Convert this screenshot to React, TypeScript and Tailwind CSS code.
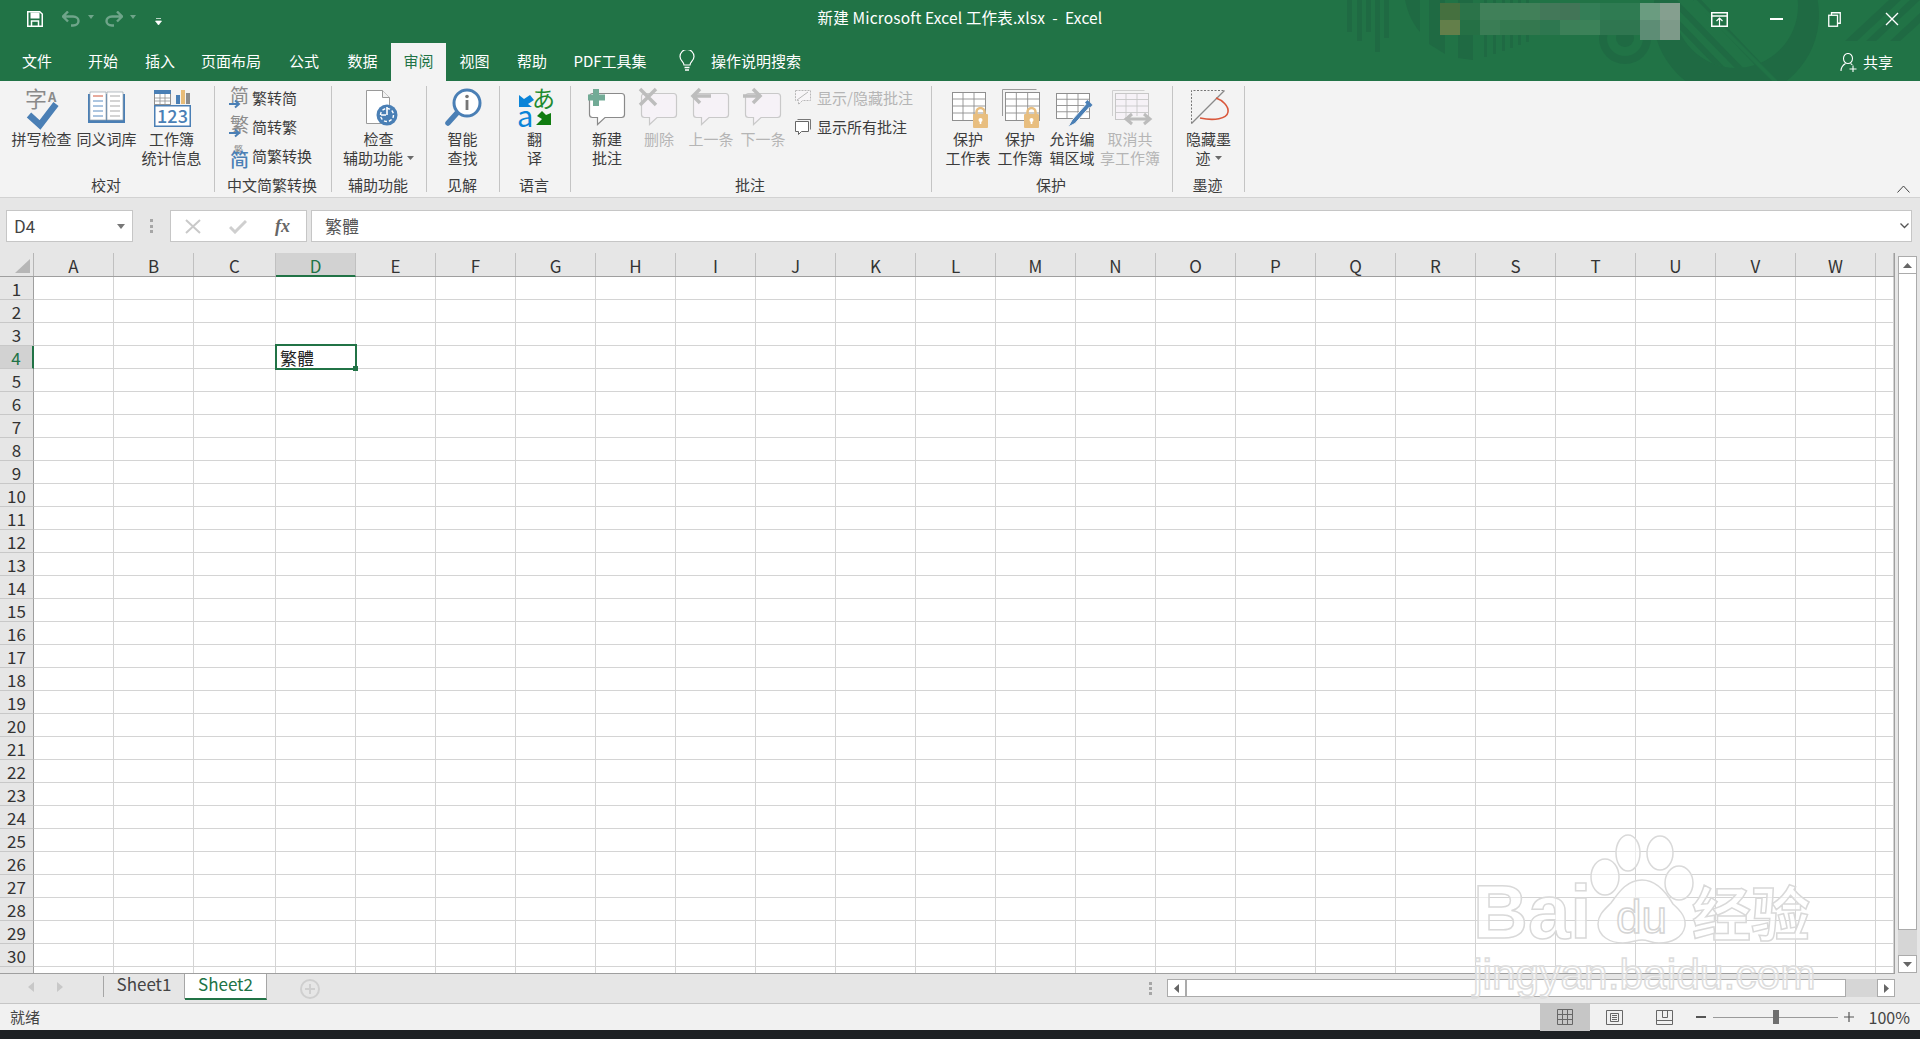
import React from "react";

const BLUE = "#4a7fb5";
const GRY = "#8c8c8c";
const COLS = ["A","B","C","D","E","F","G","H","I","J","K","L","M","N","O","P","Q","R","S","T","U","V","W",""];
const ROWS = Array.from({ length: 31 }, (_, i) => i + 1);

const Svg = ({ w = 44, h = 44, children }: { w?: number; h?: number; children: React.ReactNode }) => (
  <svg width={w} height={h} viewBox={`0 0 ${w} ${h}`} className="block overflow-visible shrink-0">{children}</svg>
);

const Caret = () => (
  <svg width="7" height="4" viewBox="0 0 7 4" className="inline-block ml-1 mb-[3px]"><path d="M0 0h7L3.5 4z" fill="#6a6a6a" /></svg>
);

const SpellIcon = () => (
  <Svg>
    <text x="5" y="21" fontSize="22" fill="#8a8a8a">字</text>
    <text x="28" y="16" fontSize="13" fontWeight="700" fill="#8a8a8a">A</text>
    <path d="M9 29 20 39 36 18" fill="none" stroke={BLUE} strokeWidth="6.5" />
  </Svg>
);
const BookIcon = () => (
  <Svg>
    <rect x="3" y="8" width="37" height="29" fill={BLUE} />
    <path d="M5 6h16v28H5zM22 6h16v28H22z" fill="#fff" stroke="#9aa3ad" strokeWidth=".7" />
    <path d="M8 10h10" stroke="#d0573a" />
    <path d="M8 15h10M8 20h10M8 25h10M8 30h10" stroke="#5b8cc0" />
    <path d="M25 10h10M25 15h10M25 20h10M25 25h10M25 30h10" stroke="#a9a9a9" />
  </Svg>
);
const StatsIcon = () => (
  <Svg>
    <rect x="4.5" y="4.5" width="16" height="14" fill="#fff" stroke="#8f8f8f" />
    <rect x="4" y="4" width="17" height="4" fill={BLUE} />
    <path d="M10 8v10M15 8v10M5 12h15M5 15h15" stroke="#8f8f8f" strokeWidth=".8" />
    <rect x="26" y="9" width="4" height="9" fill={BLUE} />
    <rect x="31" y="4" width="4" height="14" fill="#e8bc78" />
    <rect x="36" y="7" width="4" height="11" fill="#8c8c8c" />
    <rect x="4.75" y="19.75" width="35.5" height="20.5" fill="#fff" stroke={BLUE} strokeWidth="1.5" />
    <text x="22.5" y="37" textAnchor="middle" fontSize="18" fontWeight="500" fill={BLUE}>123</text>
  </Svg>
);
const SmallChar = ({ c, arrow = true, color = GRY }: { c: string; arrow?: boolean; color?: string }) => (
  <Svg w={20} h={22}>
    <text x="1" y="16" fontSize="19" fill={color}>{c}</text>
    {arrow && <path d="M0 17h9M6 13.5l4 3.5-4 3.5" fill="none" stroke={BLUE} strokeWidth="2" />}
  </Svg>
);
const ConvertIcon = () => (
  <Svg w={20} h={24}>
    <text x="5" y="9" fontSize="9" fill="#8c8c8c">繁</text>
    <text x="1" y="23" fontSize="19" fontWeight="500" fill={BLUE}>简</text>
  </Svg>
);
const AccessIcon = () => (
  <Svg>
    <path d="M9.5 4.5h16l7 7v26h-23z" fill="#fff" stroke="#9a9a9a" />
    <path d="M25.5 4.5v7h7" fill="#f2f2f2" stroke="#9a9a9a" />
    <circle cx="30" cy="29" r="10.5" fill={BLUE} />
    <circle cx="30" cy="29" r="6.5" fill="none" stroke="#fff" strokeWidth="1.4" strokeDasharray="3 2" />
    <path d="M30 21v8M24 29h5" stroke="#fff" strokeWidth="1.6" />
  </Svg>
);
const SearchIcon = () => (
  <Svg>
    <path d="M16 27 7 37" stroke={BLUE} strokeWidth="5.5" strokeLinecap="round" />
    <circle cx="26" cy="17" r="13" fill="#fff" stroke={BLUE} strokeWidth="3" />
    <circle cx="26" cy="10.5" r="1.8" fill="#777" />
    <rect x="24.6" y="14" width="2.8" height="10" fill="#777" />
  </Svg>
);
const TranslateIcon = () => (
  <Svg>
    <path d="M6 9l5 4 6-4 4 5-6 4 4 3H6z" fill="#0a84d8" />
    <text x="19" y="21" fontSize="23" fill="#1f8a2e">あ</text>
    <text x="4" y="41" fontSize="29" fill="#0a84d8">a</text>
    <path d="M38 27v12H23l6-6-5-3 5-5 4 4z" fill="#107c10" />
  </Svg>
);
const Bubble = ({ dis = false }: { dis?: boolean }) => (
  <path
    d="M7.5 7.5h29a3 3 0 0 1 3 3v18a3 3 0 0 1-3 3H20l-7.500 7v-7H7.500a3 3 0 0 1-3-3v-18a3 3 0 0 1 3-3z"
    fill={dis ? "#f6f2f7" : "#fff"}
    stroke={dis ? "#c9c9c9" : "#8a8a8a"}
    strokeWidth="1.200"
  />
);
const NewIcon = () => (
  <Svg>
    <Bubble />
    <path d="M11 3v17M3 11.500h17" stroke="#72ab96" strokeWidth="6" />
  </Svg>
);
const DeleteIcon = () => (
  <Svg>
    <Bubble dis />
    <path d="M3 3l16 16M19 3 3 19" stroke="#bdbdbd" strokeWidth="3.500" />
  </Svg>
);
const PrevIcon = () => (
  <Svg>
    <Bubble dis />
    <path d="M11 3 4 10l7 7M5 10h17" fill="none" stroke="#bdbdbd" strokeWidth="3.500" />
  </Svg>
);
const NextIcon = () => (
  <Svg>
    <Bubble dis />
    <path d="M12 3l7 7-7 7M18 10H2" fill="none" stroke="#bdbdbd" strokeWidth="3.500" />
  </Svg>
);
const ShowHideIcon = () => (
  <Svg w={18} h={18}>
    <path d="M1.500 1.500h15v10h-8l-4 4v-4h-3z" fill="#f8f6f8" stroke="#b8b8b8" strokeDasharray="2 1" />
    <path d="M3 11 14 3" stroke="#b8b8b8" />
  </Svg>
);
const ShowAllIcon = () => (
  <Svg w={18} h={18}>
    <path d="M3.500 1.500h13v10" fill="none" stroke="#777" />
    <path d="M1.500 3.500h13v10h-7l-3 3v-3h-3z" fill="#fff" stroke="#666" />
  </Svg>
);
const SheetGrid = ({ x, y, w, h, c = "#8f8f8f", f = "#fff" }: { x: number; y: number; w: number; h: number; c?: string; f?: string }) => {
  const cw = w / 3;
  const rh = h / 4;
  return (
    <g fill="none" stroke={c}>
      <rect x={x + 0.5} y={y + 0.5} width={w} height={h} fill={f} />
      <path d={`M${x + cw} ${y}v${h}M${x + 2 * cw} ${y}v${h}M${x} ${y + rh}h${w}M${x} ${y + 2 * rh}h${w}M${x} ${y + 3 * rh}h${w}`} strokeWidth=".9" />
    </g>
  );
};
const Lock = ({ x, y }: { x: number; y: number }) => (
  <g>
    <path d={`M${x + 3.500} ${y + 7}v-3a4 4 0 0 1 8 0v3`} fill="none" stroke="#e8be7f" strokeWidth="2.500" />
    <rect x={x} y={y + 6} width="15" height="14" rx="1" fill="#e8be7f" />
    <circle cx={x + 7.500} cy={y + 12} r="2" fill="#fff" />
    <rect x={x + 6.700} y={y + 12} width="1.600" height="4" fill="#fff" />
  </g>
);
const ProtectSheetIcon = () => (
  <Svg>
    <SheetGrid x={6} y={6} w={33} h={28} />
    <Lock x={27} y={22} />
  </Svg>
);
const ProtectBookIcon = () => (
  <Svg>
    <path d="M4.500 30V3.500h34" fill="none" stroke="#9a9a9a" />
    <SheetGrid x={7} y={6} w={34} h={28} />
    <Lock x={26} y={22} />
  </Svg>
);
const AllowEditIcon = () => (
  <Svg>
    <SheetGrid x={6} y={7} w={33} h={25} />
    <path d="M37 17 22 34l-4 7 7-3.500 15-17z" fill={BLUE} stroke="#f3f3f3" strokeWidth="1" />
    <path d="M37.500 14l5 5-2.500 2.500-5-5z" fill={BLUE} />
  </Svg>
);
const UnshareIcon = () => (
  <Svg>
    <path d="M4.500 30V4.500h32" fill="none" stroke="#cfcfcf" />
    <SheetGrid x={7} y={7} w={33} h={26} c="#c7c7c7" f="#f6f2f7" />
    <path d="M18 33h22" stroke="#f3f3f3" strokeWidth="6" />
    <path d="M20 33h20M24 28l-6 5 6 5M36 28l6 5-6 5" fill="none" stroke="#bcbcbc" strokeWidth="3" />
  </Svg>
);
const InkIcon = () => (
  <Svg>
    <path d="M4.500 37.500v-33h33" fill="none" stroke="#777" strokeDasharray="2 1.500" />
    <path d="M37.500 4.500 4.500 37.500" stroke="#8a8a8a" strokeWidth="1.300" />
    <path d="M29 12c6 2 13 8 12 14-1 7-14 9-28 6" fill="none" stroke="#d9573b" strokeWidth="1.600" />
  </Svg>
);

const Big = ({ icon, l1, l2, w, dis = false, caret = false }: { icon: React.ReactNode; l1: string; l2?: string; w: string; dis?: boolean; caret?: boolean }) => (
  <div className={`${w} flex flex-col items-center shrink-0`}>
    <div className="h-[43px]">{icon}</div>
    <div className={`text-[15px] leading-[19px] text-center whitespace-nowrap ${dis ? "text-[#b5b5b5]" : "text-[#3c3c3c]"}`}>
      <div>{l1}</div>
      {l2 && <div>{l2}{caret && <Caret />}</div>}
    </div>
  </div>
);

const Group = ({ w, label, children, cls = "" }: { w: string; label: string; children: React.ReactNode; cls?: string }) => (
  <div className={`${w} shrink-0 mt-[5px] h-[106px] border-r border-[#c4c4c4] flex flex-col`}>
    <div className={`h-[92px] flex ${cls}`}>{children}</div>
    <div className="h-[14px] pr-[2px] leading-[14px] text-[15px] text-center text-[#3c3c3c] whitespace-nowrap">{label}</div>
  </div>
);

const SmallRow = ({ icon, text, dis = false }: { icon: React.ReactNode; text: string; dis?: boolean }) => (
  <div className={`h-[24px] flex items-center gap-[5px] text-[15px] whitespace-nowrap ${dis ? "text-[#b5b5b5]" : "text-[#3c3c3c]"}`}>
    <div className="w-[18px] flex justify-center">{icon}</div>
    {text}
  </div>
);

const TitleDecoration = () => {
  const patches = [
    ["#45703f", "#637f4a"], ["#2b7349", "#257045"], ["#408059", "#3a7d55"], ["#3f8059", "#347a50"],
    ["#418059", "#34784f"], ["#437859", "#2e7750"], ["#427557", "#3c8058"], ["#347e57", "#3c8259"],
    ["#2f7b52", "#2f7650"], ["#2f7b52", "#2f7650"], ["#6a9c80", "#5d8d75"], ["#859f8f", "#7d9a89"],
  ];
  const d = "#1f6a43";
  return (
    <svg className="absolute left-0 top-0" width="1920" height="81" viewBox="0 0 1920 81">
      <defs>
        <clipPath id="inner"><circle cx="1736" cy="6" r="62" /></clipPath>
      </defs>
      {[[1347, 32], [1357, 41], [1366, 32], [1375, 52], [1384, 38]].map(([x, h]) => (
        <rect key={x} x={x} y={0} width={5} height={h} fill={d} />
      ))}
      <path d="M1405 0c3 14 8 24 15 32V0z" fill={d} />
      <path d="M1429 0v44l16 10V0z" fill={d} />
      <path d="M1458 0v58l15 2V0z" fill={d} />
      {[1484, 1493, 1502, 1510, 1518, 1526].map((x, i) => (
        <rect key={x} x={x} y={0} width={3} height={57 - i * 3} fill={d} />
      ))}
      <circle cx="1625" cy="38" r="26" fill={d} />
      <circle cx="1625" cy="38" r="18" fill="#217346" />
      <circle cx="1625" cy="38" r="9" fill={d} />
      <circle cx="1736" cy="15" r="83" fill={d} />
      <circle cx="1736" cy="6" r="62" fill="#217346" />
      <g clipPath="url(#inner)" stroke={d} strokeWidth="6">
        <path d="M1665 10l60 62M1665 -8l78 80M1680 -18l80 84" />
      </g>
      <path d="M1694 0l82 82" stroke="#217346" strokeWidth="4" />
      <path d="M1845 41l44-41h12l-44 41zM1866 41l44-41h10v0l-44 41zM1890 41l30-28v10l-20 18z" fill={d} />
      {patches.map(([a, b], i) => (
        <g key={i} shapeRendering="crispEdges">
          <rect x={1440 + i * 20} y={3} width={20} height={17} fill={a} />
          <rect x={1440 + i * 20} y={20} width={20} height={i >= 10 ? 20 : 15} fill={b} />
        </g>
      ))}
    </svg>
  );
};

const TabItem = ({ t, w, active = false }: { t: string; w: string; active?: boolean }) => (
  <div className={`${w} shrink-0 h-[38px] pb-[2px] flex items-center justify-center text-[15px] whitespace-nowrap ${active ? "bg-[#f3f3f3] text-[#217346]" : "text-white"}`}>{t}</div>
);

const Watermark = () => (
  <div className="absolute left-[1470px] top-[830px] w-[350px] h-[175px] pointer-events-none">
    <svg className="absolute left-0 top-0" width="350" height="175" viewBox="0 0 350 175">
      <g fill="#ffffff" fillOpacity=".55" stroke="#d9d9d9" strokeWidth="1.500">
        <ellipse cx="135" cy="47" rx="14" ry="18" />
        <ellipse cx="158" cy="23" rx="12" ry="18" />
        <ellipse cx="190" cy="23" rx="13" ry="17" />
        <ellipse cx="209" cy="53" rx="14" ry="17" />
        <path d="M172 50c14 0 24 12 31 24 9 8 13 14 12 22-2 12-14 17-26 17-7 0-11-3-17-3s-11 3-19 3c-13 0-25-7-25-19 0-9 6-14 13-21 8-11 16-23 31-23z" />
      </g>
    </svg>
    <div className="absolute left-[3px] top-[42px] text-[76px] leading-[80px] font-bold text-white/55 [-webkit-text-stroke:1.5px_#d9d9d9] font-['Liberation_Sans',sans-serif]">Bai</div>
    <div className="absolute left-[146px] top-[62px] text-[46px] leading-[50px] text-white/60 [-webkit-text-stroke:1.5px_#d4d4d4] font-['Liberation_Sans',sans-serif]">du</div>
    <div className="absolute left-[222px] top-[46px] text-[59px] leading-[70px] font-bold text-white/55 [-webkit-text-stroke:1.5px_#d9d9d9] whitespace-nowrap">经验</div>
    <div className="absolute left-[3px] top-[120px] text-[42.5px] leading-[50px] text-white/50 [-webkit-text-stroke:1.5px_#dcdcdc] whitespace-nowrap font-['Liberation_Sans',sans-serif]">jingyan.baidu.com</div>
  </div>
);

export default function App() {
  return (
    <div className="relative w-[1920px] h-[1039px] overflow-hidden bg-[#e6e6e6] font-['Noto_Sans_CJK_SC','Noto_Sans',sans-serif] text-[#3c3c3c]">
      {/* Title bar + tabs */}
      <div className="relative h-[81px] bg-[#217346] overflow-hidden">
        <TitleDecoration />
        <div className="relative h-[43px] grid grid-cols-[1fr_auto_1fr] items-center">
          <div className="flex items-center pl-[27px] pb-[5px]">
            <svg width="16" height="16" viewBox="0 0 16 16">
              <path d="M.75.75h12L15.250 3v12.250H.75z" fill="none" stroke="#fff" strokeWidth="1.500" />
              <rect x="3.500" y="1.500" width="9" height="6" fill="#fff" />
              <path d="M4.500 15v-5h7v5" fill="none" stroke="#fff" strokeWidth="1.500" />
            </svg>
            <svg width="19" height="16" viewBox="0 0 19 16" className="ml-[19px]">
              <path d="M1 5.500h10c3.500 0 5.500 2 5.500 4.500s-2 4.500-5.500 4.500H9M6 .500 1 5.500l5 5" fill="none" stroke="#6fa58a" strokeWidth="2.400" />
            </svg>
            <svg width="6" height="4" viewBox="0 0 6 4" className="ml-[7px] mb-[5px]"><path d="M0 0h6L3 4z" fill="#6fa58a" /></svg>
            <svg width="19" height="16" viewBox="0 0 19 16" className="ml-[10px]">
              <path d="M18 5.500H8C4.500 5.500 2.500 7.500 2.500 10s2 4.500 5.500 4.500h2M13 .500l5 5-5 5" fill="none" stroke="#6fa58a" strokeWidth="2.400" />
            </svg>
            <svg width="6" height="4" viewBox="0 0 6 4" className="ml-[7px] mb-[5px]"><path d="M0 0h6L3 4z" fill="#6fa58a" /></svg>
            <svg width="7" height="7" viewBox="0 0 7 7" className="ml-[19px] mt-[5px]"><path d="M1 .500h5M.500 3h6L3.500 7z" fill="#fff" stroke="#fff" strokeWidth=".7" /></svg>
          </div>
          <div className="text-white text-[15.5px] tracking-[0.15px] whitespace-nowrap pb-[7px]">新建 Microsoft Excel 工作表.xlsx&nbsp; -&nbsp; Excel</div>
          <div className="flex items-center justify-end pb-[5px]">
            <div className="w-[57px] flex justify-center">
              <svg width="17" height="15" viewBox="0 0 17 15" fill="none" stroke="#fff">
                <rect x=".75" y=".75" width="15.500" height="13.500" strokeWidth="1.500" />
                <path d="M1 4h15" strokeWidth="1.500" />
                <path d="M8.500 14V7M5.500 9l3-3 3 3" strokeWidth="1.200" />
              </svg>
            </div>
            <div className="w-[57px] flex justify-center"><div className="w-[13px] h-[1.500px] bg-white" /></div>
            <div className="w-[58px] flex justify-center">
              <svg width="13" height="15" viewBox="0 0 13 15" fill="none" stroke="#fff" strokeWidth="1.300">
                <path d="M3.500 3V.75h8.750v10.500H9.500" />
                <rect x=".75" y="3.250" width="8.750" height="11" />
              </svg>
            </div>
            <div className="w-[57px] flex justify-center">
              <svg width="14" height="14" viewBox="0 0 14 14" fill="none" stroke="#fff" strokeWidth="1.400"><path d="M1 1l12 12M13 1 1 13" /></svg>
            </div>
          </div>
        </div>
        <div className="relative h-[38px] flex items-center">
          <TabItem t="文件" w="w-[74px]" />
          <TabItem t="开始" w="w-[58px]" />
          <TabItem t="插入" w="w-[56px]" />
          <TabItem t="页面布局" w="w-[86px]" />
          <TabItem t="公式" w="w-[60px]" />
          <TabItem t="数据" w="w-[57px]" />
          <TabItem t="审阅" w="w-[55px]" active />
          <TabItem t="视图" w="w-[57px]" />
          <TabItem t="帮助" w="w-[58px]" />
          <TabItem t="PDF工具集" w="w-[98px]" />
          <div className="ml-[20px] mb-[2px] w-[16px] flex justify-center">
            <svg width="16" height="22" viewBox="0 0 16 22" fill="none" stroke="#fff" strokeWidth="1.200">
              <path d="M5 15c0-3-4-4.500-4-8.500a7 7 0 0 1 14 0c0 4-4 5.500-4 8.500z" />
              <path d="M5.500 17.500h5M6 20h4" strokeWidth="1.500" />
            </svg>
          </div>
          <div className="ml-[16px] mb-[2px] text-white text-[15px] whitespace-nowrap">操作说明搜索</div>
          <div className="ml-auto mr-[27px] mt-[1px] flex items-center gap-[6px] text-white text-[15px]">
            <svg width="17" height="19" viewBox="0 0 17 19" fill="none" stroke="#fff" strokeWidth="1.100">
              <ellipse cx="8" cy="5.500" rx="4.500" ry="5" />
              <path d="M1 18c0-4 2-6 4.500-7.500M10.500 10.500c.7.400 1.300.9 1.800 1.500M9.500 16h7M13 12.500v6.500" />
            </svg>
            共享
          </div>
        </div>
      </div>

      {/* Ribbon */}
      <div className="relative h-[117px] bg-[#f3f3f3] border-b border-[#d2d2d2] flex items-start">
        <Group w="w-[215px]" label="校对" cls="pl-[9px]">
          <Big w="w-[65px]" icon={<SpellIcon />} l1="拼写检查" />
          <Big w="w-[65px]" icon={<BookIcon />} l1="同义词库" />
          <Big w="w-[65px]" icon={<StatsIcon />} l1="工作簿" l2="统计信息" />
        </Group>
        <Group w="w-[117px]" label="中文简繁转换" cls="flex-col gap-[5px] pl-[14px]">
          <div className="flex items-center h-[24px] gap-[3px] text-[15px] whitespace-nowrap"><SmallChar c="简" />繁转简</div>
          <div className="flex items-center h-[24px] gap-[3px] text-[15px] whitespace-nowrap"><SmallChar c="繁" />简转繁</div>
          <div className="flex items-center h-[24px] gap-[3px] text-[15px] whitespace-nowrap"><ConvertIcon />简繁转换</div>
        </Group>
        <Group w="w-[95px]" label="辅助功能">
          <Big w="w-[93px]" icon={<AccessIcon />} l1="检查" l2="辅助功能" caret />
        </Group>
        <Group w="w-[73px]" label="见解">
          <Big w="w-[71px]" icon={<SearchIcon />} l1="智能" l2="查找" />
        </Group>
        <Group w="w-[71px]" label="语言">
          <Big w="w-[69px]" icon={<TranslateIcon />} l1="翻" l2="译" />
        </Group>
        <Group w="w-[361px]" label="批注" cls="pl-[10px]">
          <Big w="w-[52px]" icon={<NewIcon />} l1="新建" l2="批注" />
          <Big w="w-[52px]" icon={<DeleteIcon />} l1="删除" dis />
          <Big w="w-[52px]" icon={<PrevIcon />} l1="上一条" dis />
          <Big w="w-[52px]" icon={<NextIcon />} l1="下一条" dis />
          <div className="pl-[5px] flex flex-col gap-[5px]">
            <SmallRow icon={<ShowHideIcon />} text="显示/隐藏批注" dis />
            <SmallRow icon={<ShowAllIcon />} text="显示所有批注" />
          </div>
        </Group>
        <Group w="w-[241px]" label="保护" cls="pl-[10px]">
          <Big w="w-[52px]" icon={<ProtectSheetIcon />} l1="保护" l2="工作表" />
          <Big w="w-[52px]" icon={<ProtectBookIcon />} l1="保护" l2="工作簿" />
          <Big w="w-[52px]" icon={<AllowEditIcon />} l1="允许编" l2="辑区域" />
          <Big w="w-[64px]" icon={<UnshareIcon />} l1="取消共" l2="享工作簿" dis />
        </Group>
        <Group w="w-[72px]" label="墨迹">
          <Big w="w-[71px]" icon={<InkIcon />} l1="隐藏墨" l2="迹" caret />
        </Group>
        <div className="ml-auto mr-[10px] mt-[104px]">
          <svg width="13" height="8" viewBox="0 0 13 8" fill="none" stroke="#444"><path d="M.5 7.500 6.500 1l6 6.500" /></svg>
        </div>
      </div>

      {/* Formula bar */}
      <div className="h-[55px] pt-[12px] pl-[6px] flex items-start">
        <div className="w-[127px] h-[32px] bg-white border border-[#c6c6c6] flex items-center justify-between pl-[7px] pr-[7px] text-[17px] text-[#444]">
          D4
          <svg width="8" height="5" viewBox="0 0 8 5"><path d="M0 0h8L4 5z" fill="#777" /></svg>
        </div>
        <div className="w-[37px] h-[32px] flex flex-col items-center justify-center gap-[2.500px]">
          <div className="w-[3px] h-[3px] bg-[#a6a6a6]" />
          <div className="w-[3px] h-[3px] bg-[#a6a6a6]" />
          <div className="w-[3px] h-[3px] bg-[#a6a6a6]" />
        </div>
        <div className="w-[137px] h-[32px] bg-white border border-[#c6c6c6] flex items-center pl-[14px]">
          <svg width="16" height="15" viewBox="0 0 16 15" fill="none" stroke="#c9c9c9" strokeWidth="2"><path d="M1 1l14 13M15 1 1 14" /></svg>
          <svg width="18" height="15" viewBox="0 0 18 15" fill="none" stroke="#cfcfcf" strokeWidth="3" className="ml-[28px]"><path d="M1 8l5 5L17 2" /></svg>
          <span className="ml-[28px] font-['Liberation_Serif',serif] italic font-bold text-[18px] text-[#666] leading-none">fx</span>
        </div>
        <div className="ml-[4px] w-[1601px] h-[32px] bg-white border border-[#c6c6c6] flex items-center justify-between pl-[13px] pr-[2px] text-[17px] text-[#555]">
          繁體
          <svg width="9" height="6" viewBox="0 0 9 6" fill="none" stroke="#555" strokeWidth="1.300"><path d="M.5.500l4 4 4-4" /></svg>
        </div>
      </div>

      {/* Sheet grid and scrollbar */}
      <div className="h-[721px] flex">
        <div className="w-[1895px] shrink-0 border-r border-b border-[#9f9f9f] overflow-hidden bg-white">
          <div className="h-[24px] flex bg-[#e6e6e6] border-b border-[#9f9f9f] text-[17px] text-[#333]">
            <div className="w-[34px] shrink-0 border-r border-[#b5b5b5] flex items-end justify-end pr-[3px] pb-[3px]">
              <svg width="15" height="14" viewBox="0 0 15 14"><path d="M15 0v14H0z" fill="#b6b6b6" /></svg>
            </div>
            {COLS.map((c) => (
              <div
                key={c || "x"}
                className={`${c === "C" ? "w-[82px]" : c === "" ? "w-[18px]" : "w-[80px]"} shrink-0 pt-[2px] border-r border-[#c0c0c0] flex items-center justify-center leading-none ${c === "D" ? "bg-[#d2d2d2] text-[#217346] border-b-2 border-b-[#217346] h-[24px]" : ""}`}
              >
                {c}
              </div>
            ))}
          </div>
          {ROWS.map((r) => (
            <div key={r} className="h-[23px] flex">
              <div className={`w-[34px] shrink-0 border-b border-[#c8c8c8] flex items-center justify-center text-[17px] leading-none ${r === 4 ? "bg-[#d2d2d2] text-[#217346] border-r-2 border-r-[#217346]" : "bg-[#e6e6e6] text-[#333] border-r border-r-[#9f9f9f]"}`}>{r}</div>
              {COLS.map((c) => (
                <div
                  key={c || "x"}
                  className={`relative ${c === "C" ? "w-[82px]" : c === "" ? "w-[18px]" : "w-[80px]"} shrink-0 border-r border-b border-[#d4d4d4]`}
                >
                  {r === 4 && c === "D" && (
                    <div className="absolute z-10 -left-[1px] -top-[2px] w-[82px] h-[26px] border-2 border-[#217346] pl-[3px] text-[17px] leading-[24px] text-[#222] whitespace-nowrap">
                      繁體
                      <div className="absolute -right-[3px] -bottom-[3px] w-[5px] h-[5px] bg-[#217346]" />
                    </div>
                  )}
                </div>
              ))}
            </div>
          ))}
        </div>
        <div className="ml-[3px] w-[19px] flex flex-col h-[721px]">
          <div className="h-[3px]" />
          <div className="h-[18px] bg-white border border-[#ababab] flex items-center justify-center">
            <svg width="9" height="5" viewBox="0 0 9 5"><path d="M0 5h9L4.500 0z" fill="#666" /></svg>
          </div>
          <div className="h-[656px] bg-white border border-[#ababab] border-t-0" />
          <div className="h-[25px] bg-[#d6d6d6]" />
          <div className="h-[18px] bg-white border border-[#ababab] flex items-center justify-center">
            <svg width="9" height="5" viewBox="0 0 9 5"><path d="M0 0h9L4.500 5z" fill="#666" /></svg>
          </div>
        </div>
      </div>

      {/* Sheet tabs */}
      <div className="h-[29px] flex items-start">
        <div className="w-[104px] h-[21px] mt-[2px] flex items-center border-r border-[#a6a6a6] pl-[28px] shrink-0">
          <svg width="6" height="10" viewBox="0 0 6 10"><path d="M6 0v10L0 5z" fill="#c8c8c8" /></svg>
          <svg width="6" height="10" viewBox="0 0 6 10" className="ml-[23px]"><path d="M0 0v10l6-5z" fill="#c8c8c8" /></svg>
        </div>
        <div className="w-[81px] h-[25px] pb-[6px] border-r border-[#a6a6a6] flex items-center justify-center text-[17px] leading-none text-[#444] shrink-0">Sheet1</div>
        <div className="w-[82px] h-[26px] pb-[6px] bg-white border-b-2 border-r border-b-[#217346] border-r-[#a6a6a6] flex items-center justify-center text-[17px] leading-none text-[#217346] shrink-0">Sheet2</div>
        <div className="ml-[33px] mt-[5px] w-[20px] h-[20px] rounded-full border-2 border-[#cfcfcf] flex items-center justify-center shrink-0">
          <svg width="10" height="10" viewBox="0 0 10 10" stroke="#cfcfcf" strokeWidth="2"><path d="M5 0v10M0 5h10" /></svg>
        </div>
        <div className="ml-[822px] w-[17px] h-[29px] flex flex-col items-center justify-center gap-[2px] shrink-0">
          <div className="w-[3px] h-[3px] bg-[#a6a6a6]" />
          <div className="w-[3px] h-[3px] bg-[#a6a6a6]" />
          <div className="w-[3px] h-[3px] bg-[#a6a6a6]" />
        </div>
        <div className="ml-[8px] mt-[5px] w-[19px] h-[18px] bg-white border border-[#ababab] flex items-center justify-center shrink-0">
          <svg width="5" height="9" viewBox="0 0 5 9"><path d="M5 0v9L0 4.500z" fill="#666" /></svg>
        </div>
        <div className="mt-[5px] w-[660px] h-[18px] bg-white border border-[#ababab] shrink-0" />
        <div className="mt-[5px] w-[31px] h-[18px] bg-[#d6d6d6] shrink-0" />
        <div className="mt-[5px] w-[18px] h-[18px] bg-white border border-[#ababab] flex items-center justify-center shrink-0">
          <svg width="5" height="9" viewBox="0 0 5 9"><path d="M0 0v9l5-4.500z" fill="#666" /></svg>
        </div>
      </div>

      {/* Status bar */}
      <div className="h-[27px] bg-[#f1f1f1] border-t border-[#c6c6c6] flex items-center pl-[10px] text-[15px] text-[#444]">
        就绪
        <div className="ml-auto flex items-center h-[27px]">
          <div className="w-[50px] h-[27px] bg-[#c6c6c6] flex items-center justify-center">
            <svg width="16" height="16" viewBox="0 0 16 16" fill="none" stroke="#666"><path d="M.5.500h15v15H.5zM5.500.500v15M10.500.500v15M.5 5.500h15M.5 10.500h15" /></svg>
          </div>
          <div className="w-[48px] flex justify-center">
            <svg width="17" height="15" viewBox="0 0 17 15" fill="none" stroke="#666"><path d="M.5.500h16v14H.5zM4.500 3.500h8v8h-8zM6 5.500h5M6 7.500h5M6 9.500h5" /></svg>
          </div>
          <div className="w-[52px] flex justify-center">
            <svg width="17" height="15" viewBox="0 0 17 15" fill="none" stroke="#666"><path d="M.5.500h16v14H.5zM6.500.500v7h5v-7M.5 10.500h16" /></svg>
          </div>
          <div className="ml-[6px] w-[10px] h-[1.500px] bg-[#555]" />
          <div className="relative ml-[7px] w-[125px] h-[1px] bg-[#9a9a9a]">
            <div className="absolute left-[60px] -top-[7px] w-[6px] h-[14px] bg-[#6f6f6f]" />
          </div>
          <svg width="10" height="10" viewBox="0 0 10 10" stroke="#555" strokeWidth="1.200" className="ml-[6px]"><path d="M5 0v10M0 5h10" /></svg>
          <div className="w-[66px] pr-[10px] text-right text-[16px] leading-none text-[#444]">100%</div>
        </div>
      </div>

      {/* Taskbar edge */}
      <div className="h-[9px] bg-[#1d2023] flex justify-end overflow-hidden">
        <span className="mr-[95px] mt-[6px] text-white text-[13px] leading-[16px]">19:24</span>
      </div>

      <Watermark />
    </div>
  );
}
